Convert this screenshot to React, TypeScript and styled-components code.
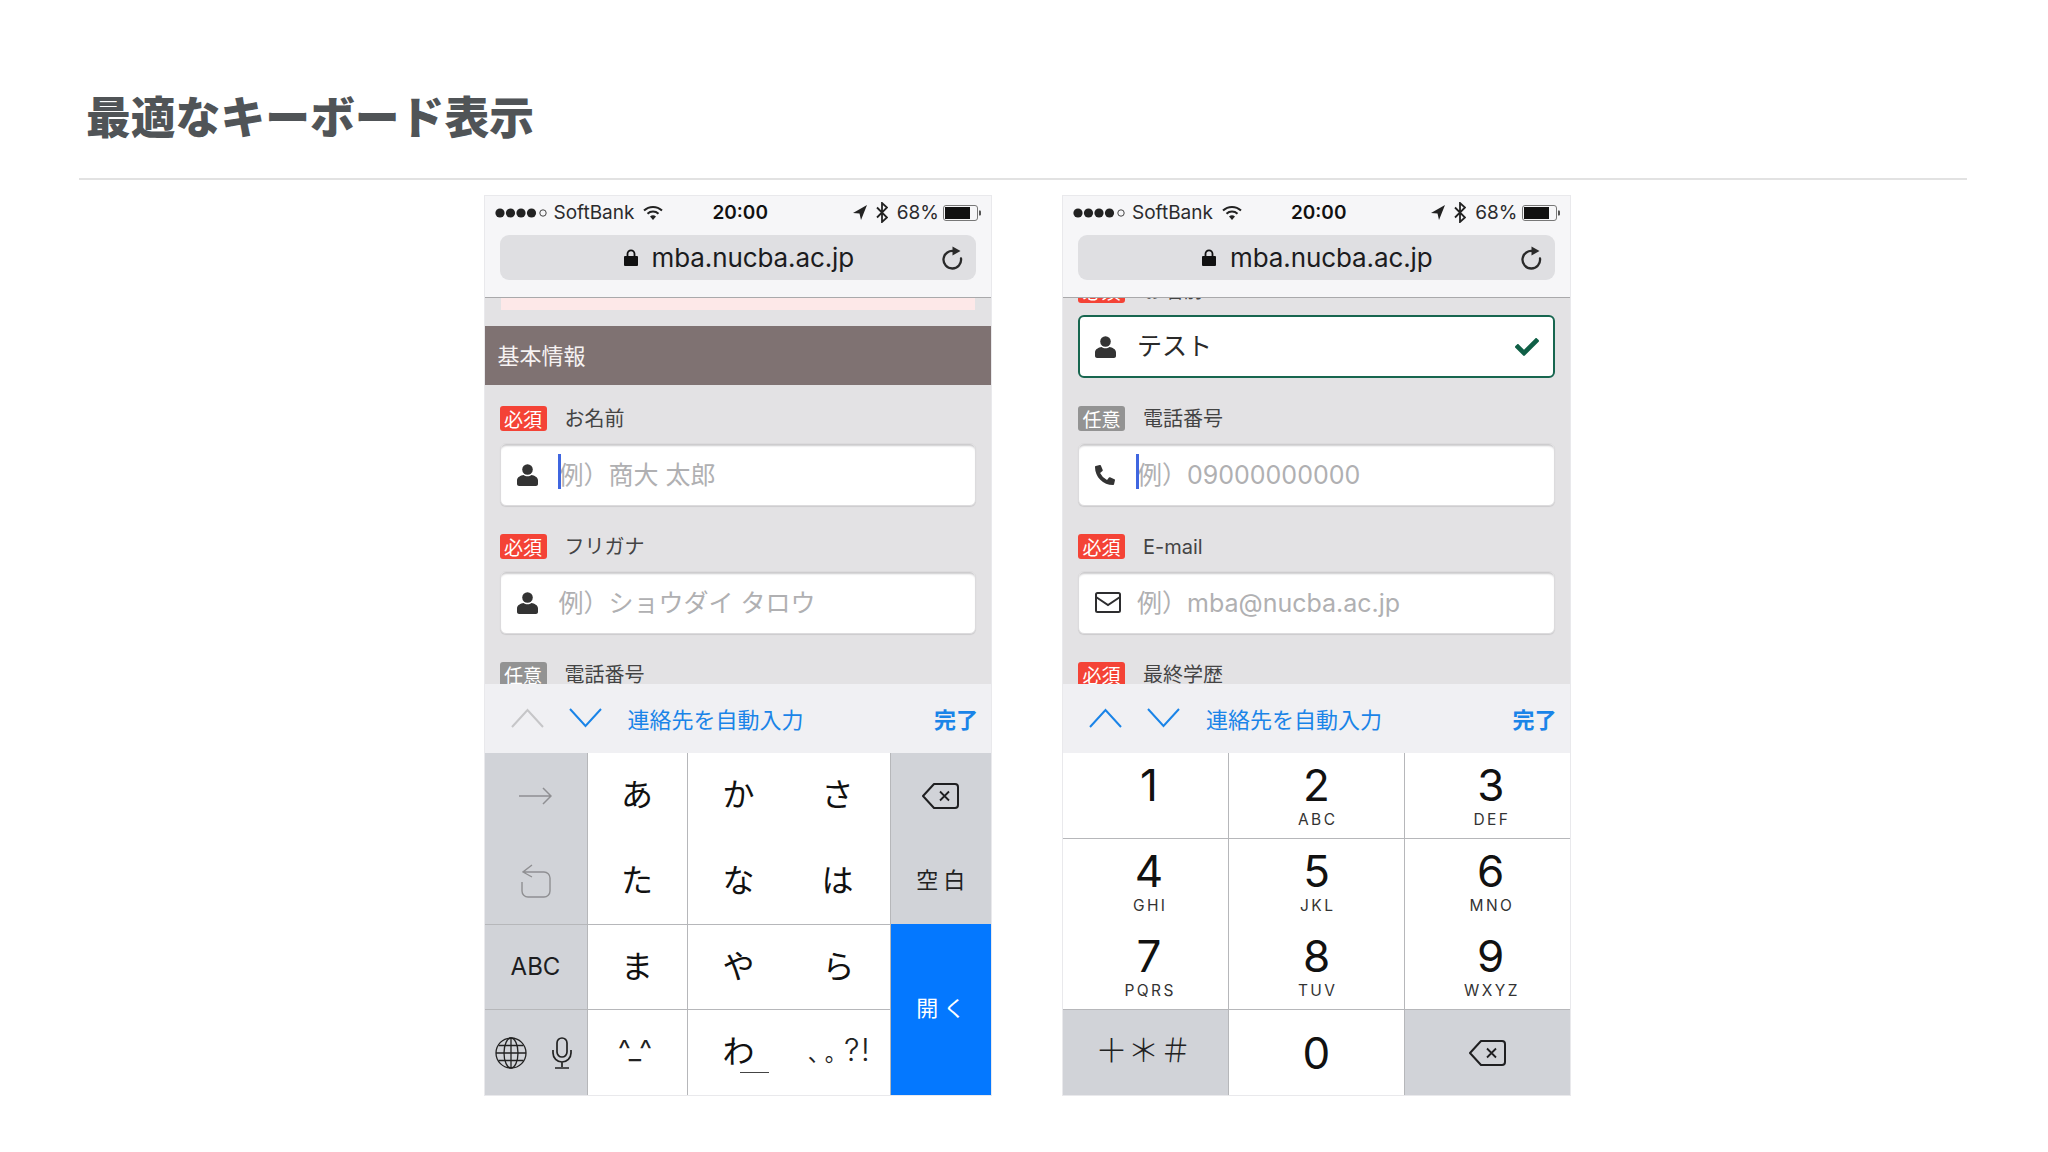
import React from "react";
import styled, { createGlobalStyle } from "styled-components";
import { FaCheck, FaPhoneAlt } from "react-icons/fa";

const Global = createGlobalStyle`
  html, body { margin: 0; padding: 0; background: #fff; width: 2048px; height: 1152px; overflow: hidden; }
  * { box-sizing: border-box; }
  body { font-family: Inter, "Noto Sans CJK JP", sans-serif; }
`;

const JP = `"Noto Sans CJK JP", "Noto Sans", sans-serif`;
const LATIN = `Inter, "Noto Sans CJK JP", sans-serif`;

const Page = styled.div`
  width: 2048px;
  height: 1152px;
  padding: 85px 81px 0 79px;
  background: #fff;
`;
const Title = styled.h1`
  margin: 0;
  padding-left: 7px;
  font: 900 44.8px/60px ${JP};
  color: #505457;
`;
const Rule = styled.hr`
  margin: 33px 0 16px;
  border: 0;
  height: 2px;
  background: #e2e2e2;
`;
const Phones = styled.div`
  display: flex;
  gap: 72px;
  padding-left: 405.500px;
`;
const Phone = styled.section`
  width: 506.500px;
  height: 899px;
  display: flex;
  flex-direction: column;
  box-shadow: 0 0 0 1px #e9e9ec;
`;
const Toolbar = styled.header`
  height: 102px;
  flex: none;
  background: #f6f6f8;
  border-bottom: 1px solid #a9a9ab;
  padding: 0 15px;
  position: relative;
  z-index: 1;
`;
const Status = styled.div`
  height: 33px;
  margin: 0 -6px 6px -5px;
  display: flex;
  align-items: center;
  font: 400 19px/1 ${LATIN};
  color: #2b2b2d;
`;
const Carrier = styled.span`
  margin-left: -3px;
`;
const StatusGroup = styled.div`
  display: flex;
  align-items: center;
  gap: 9px;
`;
const Time = styled.span`
  margin-left: 49px;
  font-weight: 600;
  color: #111;
`;
const StatusRight = styled(StatusGroup)`
  margin-left: auto;
`;
const BatteryWrap = styled.span`
  display: flex;
  margin-left: -5px;
`;
const Address = styled.div`
  height: 45px;
  background: #dfdfe2;
  border-radius: 9px;
  display: flex;
  align-items: center;
  padding: 0 13px 0 124px;
  font: 400 26px/1 ${LATIN};
  color: #1c1c1e;
`;
const AddressText = styled.span`
  margin-left: 14px;
  letter-spacing: -0.1px;
`;
const Reload = styled.span`
  margin-left: auto;
  display: flex;
`;
const Form = styled.main`
  flex: 1;
  min-height: 0;
  overflow: hidden;
  background: #e3e2e4;
`;
const Alert = styled.div`
  height: 12px;
  margin: 0 16px 16px;
  background: #fde8e8;
`;
const SectionHead = styled.h2`
  margin: 0 0 21px;
  height: 59px;
  padding: 0 0 4px 13px;
  display: flex;
  align-items: center;
  background: #7f7272;
  color: #f6f2f2;
  font: 400 22px/1 ${JP};
`;
const Fields = styled.div<{ $shift?: number }>`
  padding: 0 15px;
  margin-top: ${(p) => p.$shift ?? 0}px;
`;
const Field = styled.div`
  margin-bottom: 28px;
`;
const LabelRow = styled.div`
  height: 25px;
  margin-bottom: 12px;
  display: flex;
  align-items: center;
  gap: 18px;
`;
const Badge = styled.span<{ $optional?: boolean }>`
  width: 47px;
  height: 25px;
  border-radius: 3px;
  display: flex;
  align-items: center;
  justify-content: center;
  background: ${(p) => (p.$optional ? "#939393" : "#f44336")};
  color: #fff;
  font: 400 19px/1 ${JP};
`;
const LabelText = styled.span`
  font: 400 20px/1 ${LATIN};
  color: #444;
`;
const InputBox = styled.div<{ $valid?: boolean }>`
  position: relative;
  height: 63px;
  display: flex;
  align-items: center;
  background: #fff;
  border-radius: 6px;
  border: ${(p) => (p.$valid ? "2px solid #17664f" : "1px solid #dcdbdd")};
  box-shadow: ${(p) => (p.$valid ? "none" : "inset 0 3px 2px -1px #cbcacc, 0 1px 1px rgba(0,0,0,.1)")};
  padding-left: ${(p) => (p.$valid ? 15 : 16)}px;
`;
const IconSlot = styled.span`
  width: 42px;
  flex: none;
  display: flex;
  color: #333;
`;
const Placeholder = styled.span`
  font: 400 25px/1 ${LATIN};
  color: #b0b0b2;
  white-space: nowrap;
  padding-top: 1px;
`;
const Value = styled.span`
  font: 400 25px/1 ${LATIN};
  color: #2a2a2a;
`;
const Caret = styled.i`
  position: absolute;
  left: 57px;
  top: 10px;
  width: 3px;
  height: 35px;
  background: #3f66e0;
`;
const CheckMark = styled.span`
  margin-left: auto;
  margin-right: 14px;
  display: flex;
  color: #0f5f46;
`;
const Accessory = styled.div`
  height: 69px;
  flex: none;
  display: flex;
  align-items: center;
  padding: 0 14px 2px 26px;
  background: #f0f0f3;
  position: relative;
  z-index: 1;
`;
const Chevrons = styled.div`
  display: flex;
  gap: 25px;
`;
const AutoFill = styled.span`
  margin-left: 26px;
  font: 400 22px/1 ${JP};
  color: #1a84e8;
`;
const Done = styled.span`
  margin-left: auto;
  margin-right: -1px;
  font: 700 22px/1 ${JP};
  color: #1a84e8;
`;
const KanaPad = styled.div`
  height: 342px;
  flex: none;
  display: grid;
  grid-template-columns: 103px 100px 102px 101px 1fr;
  grid-template-rows: 85px 86px 85px 86px;
`;
const NumPad = styled.div`
  height: 342px;
  flex: none;
  display: grid;
  grid-template-columns: 166px 176px 1fr;
  grid-template-rows: 85px 86px 85px 86px;
`;
const toneBg = { white: "#fff", gray: "#d1d3d8", blue: "#0478ff" };
const Key = styled.div<{
  $tone?: "white" | "gray" | "blue";
  $line?: boolean;
  $top?: boolean;
  $span?: boolean;
  $flat?: boolean;
  $nudge?: number;
}>`
  position: relative;
  display: flex;
  align-items: center;
  justify-content: center;
  padding-bottom: ${(p) => (p.$flat ? 0 : 7)}px;
  padding-right: ${(p) => p.$nudge ?? 0}px;
  background: ${(p) => toneBg[p.$tone ?? "white"]};
  border-right: ${(p) => (p.$line ? "1px solid #b6b7ba" : "0")};
  border-top: ${(p) => (p.$top ? "1px solid #b6b7ba" : "0")};
  grid-row: ${(p) => (p.$span ? "span 2" : "auto")};
`;
const Kana = styled.span`
  font: 400 32px/1 ${JP};
  color: #111;
`;
const KanaWa = styled(Kana)`
  position: relative;
  &::after {
    content: "";
    position: absolute;
    left: 18px;
    right: -14px;
    bottom: -8px;
    height: 1px;
    background: #444;
  }
`;
const Face = styled.span`
  font: 400 27px/1 ${LATIN};
  color: #222;
  margin-right: 4px;
`;
const Punct = styled.span`
  display: flex;
  align-items: baseline;
  font: 400 22px/1 ${JP};
  letter-spacing: -5px;
  text-spacing-trim: space-all;
  color: #222;
`;
const PunctLatin = styled.span`
  font: 300 31px/1 ${LATIN};
  letter-spacing: 1.500px;
  margin-left: 2px;
`;
const SideText = styled.span`
  font: 400 24px/1 ${LATIN};
  color: #1d1d1f;
  padding-top: 6px;
`;
const Spaced = styled.span`
  font: 400 22px/1 ${JP};
  letter-spacing: 5px;
  margin-right: -5px;
  color: #222;
`;
const OpenKey = styled(Spaced)`
  color: #fff;
`;
const SplitKey = styled.div`
  display: flex;
  align-items: center;
  gap: 25px;
  padding: 0 5px 0 0;
`;
const DigitKey = styled(Key)`
  flex-direction: column;
  justify-content: flex-start;
  padding: 9px 0 0;
  padding-left: ${(p) => (p.$nudge ? p.$nudge : 0)}px;
`;
const Digit = styled.span`
  font: 400 44px/46px ${LATIN};
  color: #111;
`;
const DigitLetters = styled.span`
  height: 18px;
  margin-top: 3px;
  font: 400 15.500px/18px ${LATIN};
  letter-spacing: 2.400px;
  margin-right: -2.400px;
  color: #333;
`;
const Symbols = styled.span`
  font: 300 32px/1 ${JP};
  color: #222;
  margin: -2px 4px 0 0;
`;
const ZeroDigit = styled(Digit)`
  padding-top: 1px;
`;

const Dots = () => (
  <svg width="53" height="10" viewBox="0 0 53 10">
    {[5, 15.5, 26, 36.5].map((x) => (
      <circle key={x} cx={x} cy="5" r="4.600" fill="#222" />
    ))}
    <circle cx="48" cy="5" r="3.200" fill="none" stroke="#444" strokeWidth="1" />
  </svg>
);
const Wifi = () => (
  <svg width="20" height="16" viewBox="0 0 20 16" fill="none" stroke="#222" strokeWidth="2">
    <path d="M1 5.500a13 13 0 0 1 18 0" />
    <path d="M4.500 8.800a8 8 0 0 1 11 0" />
    <path d="M10 15l-3-3.400a4.500 4.500 0 0 1 6 0z" fill="#222" stroke="none" />
  </svg>
);
const Locate = () => (
  <svg width="14" height="15" viewBox="0 0 14 15">
    <path d="M14 0L0 8l6.500 .4L8 15z" fill="#222" />
  </svg>
);
const Bluetooth = () => (
  <svg width="12" height="21" viewBox="0 0 12 21" fill="none" stroke="#222" strokeWidth="1.800">
    <path d="M1 5.500l10 10-5 4.500V1l5 4.500-10 10" />
  </svg>
);
const Battery = () => (
  <svg width="39" height="16" viewBox="0 0 39 16">
    <rect x=".5" y=".5" width="34" height="15" rx="2.500" fill="none" stroke="#777" />
    <rect x="2" y="2" width="25" height="12" fill="#111" />
    <path d="M36 5.500h1a1 1 0 0 1 1 1v3a1 1 0 0 1-1 1h-1z" fill="#555" />
  </svg>
);
const Lock = () => (
  <svg width="14" height="17" viewBox="0 0 14 17">
    <path d="M3.500 7V4.800a3.500 3.500 0 0 1 7 0V7" fill="none" stroke="#111" strokeWidth="1.800" />
    <rect y="7" width="14" height="10" rx="1" fill="#111" />
  </svg>
);
const ReloadIcon = () => (
  <svg width="22" height="24" viewBox="0 0 22 24" fill="none">
    <path d="M13.500 5.200A8.800 8.800 0 1 0 20 12.500" stroke="#2a2a2a" strokeWidth="2.300" strokeLinecap="round" />
    <path d="M11.500 0.500L19.500 5l-8 4.500z" fill="#2a2a2a" />
  </svg>
);
const Person = () => (
  <svg width="21" height="22" viewBox="0 0 21 22" fill="#333">
    <circle cx="10.500" cy="5.500" r="5.300" />
    <path d="M0 20v-3.500c0-3.500 3.800-5 6.500-5.500 2 1.800 6 1.800 8 0 2.700 .5 6.500 2 6.500 5.500V20c0 1-1 2-2 2H2c-1 0-2-1-2-2z" />
  </svg>
);
const Mail = () => (
  <svg width="26" height="21" viewBox="0 0 26 21" fill="none" stroke="#2d2d2f" strokeWidth="2">
    <rect x="1" y="1" width="24" height="19" rx="1.500" />
    <path d="M1 5l12 8 12-8" />
  </svg>
);
const Up = ({ on }: { on?: boolean }) => (
  <svg width="33" height="20" viewBox="0 0 33 20" fill="none" stroke={on ? "#1a84e8" : "#c6c6c8"} strokeWidth="2">
    <path d="M1 19L16.500 2 32 19" />
  </svg>
);
const Down = () => (
  <svg width="33" height="20" viewBox="0 0 33 20" fill="none" stroke="#1a84e8" strokeWidth="2">
    <path d="M1 1l15.500 17L32 1" />
  </svg>
);
const Backspace = () => (
  <svg width="37" height="26" viewBox="0 0 37 26" fill="none" stroke="#1f1f21" strokeWidth="2" strokeLinejoin="round">
    <path d="M12 1h21a3 3 0 0 1 3 3v18a3 3 0 0 1-3 3H12L1 13z" />
    <path d="M18 8.500l9 9M27 8.500l-9 9" strokeWidth="1.800" />
  </svg>
);
const ArrowRight = () => (
  <svg width="33" height="18" viewBox="0 0 33 18" fill="none" stroke="#8f8f92" strokeWidth="1.500">
    <path d="M0 9h32M24 1l8 8-8 8" />
  </svg>
);
const Undo = () => (
  <svg width="32" height="34" viewBox="0 0 32 34" fill="none" stroke="#8f8f92" strokeWidth="1.400">
    <path d="M12 1L3 8l9 5M3 8h21a6 6 0 0 1 6 6v13a6 6 0 0 1-6 6H8a6 6 0 0 1-6-6V18" />
  </svg>
);
const Globe = () => (
  <svg width="32" height="32" viewBox="0 0 32 32" fill="none" stroke="#222" strokeWidth="1.300">
    <circle cx="16" cy="16" r="15" />
    <ellipse cx="16" cy="16" rx="7" ry="15" />
    <path d="M16 1v30M1 16h30M3.500 8.500h25M3.500 23.500h25" />
  </svg>
);
const Mic = () => (
  <svg width="20" height="32" viewBox="0 0 20 32" fill="none" stroke="#222" strokeWidth="1.700">
    <rect x="5" y="1" width="10" height="19" rx="5" />
    <path d="M1 13v3a9 9 0 0 0 18 0v-3M10 25v5M3 31h14" />
  </svg>
);

const Toolbars = () => (
  <Toolbar>
    <Status>
      <StatusGroup>
        <Dots />
        <Carrier>SoftBank</Carrier>
        <Wifi />
      </StatusGroup>
      <Time>20:00</Time>
      <StatusRight>
        <Locate />
        <Bluetooth />
        <span>68%</span>
        <BatteryWrap><Battery /></BatteryWrap>
      </StatusRight>
    </Status>
    <Address>
      <Lock />
      <AddressText>mba.nucba.ac.jp</AddressText>
      <Reload>
        <ReloadIcon />
      </Reload>
    </Address>
  </Toolbar>
);

const FieldBlock = ({
  label,
  optional,
  children,
}: {
  label: string;
  optional?: boolean;
  children?: React.ReactNode;
}) => (
  <Field>
    <LabelRow>
      <Badge $optional={optional}>{optional ? "任意" : "必須"}</Badge>
      <LabelText>{label}</LabelText>
    </LabelRow>
    {children}
  </Field>
);

const Assist = ({ upOn }: { upOn?: boolean }) => (
  <Accessory>
    <Chevrons>
      <Up on={upOn} />
      <Down />
    </Chevrons>
    <AutoFill>連絡先を自動入力</AutoFill>
    <Done>完了</Done>
  </Accessory>
);

const numRows = [
  [["1", ""], ["2", "ABC"], ["3", "DEF"]],
  [["4", "GHI"], ["5", "JKL"], ["6", "MNO"]],
  [["7", "PQRS"], ["8", "TUV"], ["9", "WXYZ"]],
];

export default function App() {
  return (
    <Page>
      <Global />
      <Title>最適なキーボード表示</Title>
      <Rule />
      <Phones>
        <Phone>
          <Toolbars />
          <Form>
            <Alert />
            <SectionHead>基本情報</SectionHead>
            <Fields>
              <FieldBlock label="お名前">
                <InputBox>
                  <IconSlot><Person /></IconSlot>
                  <Placeholder>例）商大 太郎</Placeholder>
                  <Caret />
                </InputBox>
              </FieldBlock>
              <FieldBlock label="フリガナ">
                <InputBox>
                  <IconSlot><Person /></IconSlot>
                  <Placeholder>例）ショウダイ タロウ</Placeholder>
                </InputBox>
              </FieldBlock>
              <FieldBlock label="電話番号" optional />
            </Fields>
          </Form>
          <Assist />
          <KanaPad>
            <Key $tone="gray" $line $flat><ArrowRight /></Key>
            <Key $line><Kana>あ</Kana></Key>
            <Key><Kana>か</Kana></Key>
            <Key $line $nudge={4}><Kana>さ</Kana></Key>
            <Key $tone="gray" $flat><Backspace /></Key>

            <Key $tone="gray" $line $flat><Undo /></Key>
            <Key $line><Kana>た</Kana></Key>
            <Key><Kana>な</Kana></Key>
            <Key $line $nudge={4}><Kana>は</Kana></Key>
            <Key $tone="gray"><Spaced>空白</Spaced></Key>

            <Key $tone="gray" $line $top><SideText>ABC</SideText></Key>
            <Key $line $top><Kana>ま</Kana></Key>
            <Key $top><Kana>や</Kana></Key>
            <Key $line $top $nudge={2}><Kana>ら</Kana></Key>
            <Key $tone="blue" $span><OpenKey>開く</OpenKey></Key>

            <Key $tone="gray" $line $top $flat>
              <SplitKey><Globe /><Mic /></SplitKey>
            </Key>
            <Key $line $top><Face>^_^</Face></Key>
            <Key $top><KanaWa>わ</KanaWa></Key>
            <Key $line $top>
              <Punct>、。<PunctLatin>?!</PunctLatin></Punct>
            </Key>
          </KanaPad>
        </Phone>

        <Phone>
          <Toolbars />
          <Form>
            <Fields $shift={-20}>
              <FieldBlock label="お名前">
                <InputBox $valid>
                  <IconSlot><Person /></IconSlot>
                  <Value>テスト</Value>
                  <CheckMark><FaCheck size={24} /></CheckMark>
                </InputBox>
              </FieldBlock>
              <FieldBlock label="電話番号" optional>
                <InputBox>
                  <IconSlot><FaPhoneAlt size={20} /></IconSlot>
                  <Placeholder>例）09000000000</Placeholder>
                  <Caret />
                </InputBox>
              </FieldBlock>
              <FieldBlock label="E-mail">
                <InputBox>
                  <IconSlot><Mail /></IconSlot>
                  <Placeholder>例）mba@nucba.ac.jp</Placeholder>
                </InputBox>
              </FieldBlock>
              <FieldBlock label="最終学歴" />
            </Fields>
          </Form>
          <Assist upOn />
          <NumPad>
            {numRows.map((row, r) =>
              row.map(([d, l], c) => (
                <DigitKey key={d} $line={c < 2} $top={r === 1} $nudge={c === 1 ? 0 : 7}>
                  <Digit>{d}</Digit>
                  <DigitLetters>{l}</DigitLetters>
                </DigitKey>
              ))
            )}
            <Key $tone="gray" $line $top><Symbols>＋＊＃</Symbols></Key>
            <Key $line $top $flat><ZeroDigit>0</ZeroDigit></Key>
            <Key $tone="gray" $top $flat><Backspace /></Key>
          </NumPad>
        </Phone>
      </Phones>
    </Page>
  );
}
